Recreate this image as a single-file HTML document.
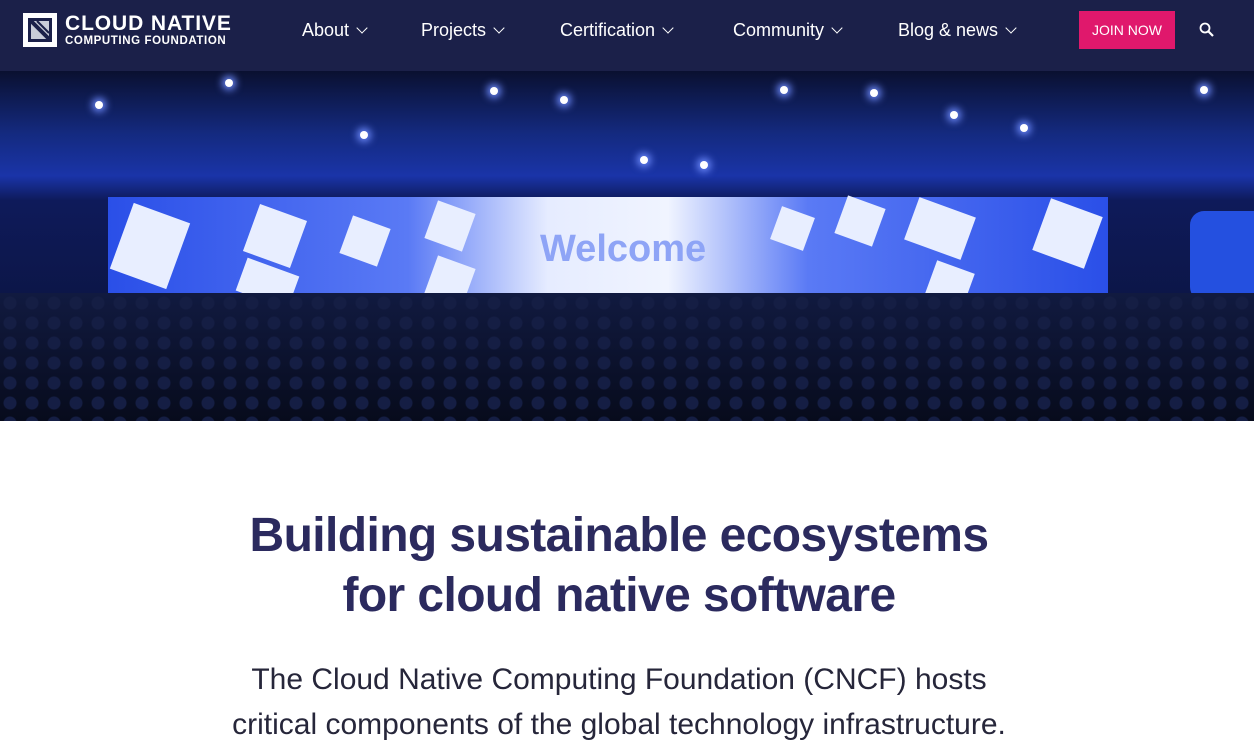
<!DOCTYPE html>
<html><head><meta charset="utf-8"><style>
*{margin:0;padding:0;box-sizing:border-box}
body{width:1254px;height:748px;overflow:hidden;background:#fff;font-family:"Liberation Sans",sans-serif}
nav{position:absolute;top:0;left:0;width:1254px;height:71px;background:#1b2049}
.logo{position:absolute;left:23px;top:13px}
.lt1{position:absolute;left:42px;top:-1px;color:#fff;font-weight:bold;font-size:21px;letter-spacing:0.9px;white-space:nowrap}
.lt2{position:absolute;left:42px;top:22px;color:#fff;font-weight:bold;font-size:11.5px;white-space:nowrap;letter-spacing:0.6px}
.menu{position:absolute;top:20px;color:#fff;font-size:18px;white-space:nowrap}
.menu span{position:absolute;white-space:nowrap}
.chev{display:inline-block;width:8px;height:8px;border-right:1.5px solid #fff;border-bottom:1.5px solid #fff;transform:rotate(45deg);margin-left:9px;position:relative;top:-4px}
.join{position:absolute;left:1079px;top:11px;width:96px;height:38px;background:#e0186c;color:#fff;font-size:14px;text-align:center;line-height:38px}
.hero{position:absolute;top:71px;left:0;width:1254px;height:350px;overflow:hidden;
background:linear-gradient(180deg,#0a1030 0%,#142a80 18%,#1a34a8 30%,#0e1a5a 37%,#0a1130 100%)}
.screen{position:absolute;left:108px;top:126px;width:1000px;height:104px;background:linear-gradient(90deg,#2a4fe8,#5a7af5 30%,#e6ecff 44%,#f0f4ff 56%,#5a7af5 70%,#2a4fe8)}
.sq{position:absolute;background:#e8eeff;transform:rotate(20deg)}
.dot{position:absolute;width:8px;height:8px;border-radius:50%;background:#fff;box-shadow:0 0 8px 3px #6f8cff}
.crowd{position:absolute;left:0;top:222px;width:1254px;height:128px;background:
radial-gradient(circle at 10px 10px,#151e44 6px,transparent 7px) 0 0/22px 20px,
linear-gradient(180deg,#111a40,#070b1c)}
h1{position:absolute;top:506px;width:1238px;text-align:center;color:#2b2a5e;font-size:48px;line-height:60px;font-weight:bold;letter-spacing:-0.6px}
p{position:absolute;top:657px;width:1238px;text-align:center;color:#26263a;font-size:30px;line-height:45px}
</style></head><body>
<nav>
<div class="logo">
<svg width="34" height="34" viewBox="0 0 34 34"><rect width="34" height="34" fill="#fff"/><rect x="5" y="5" width="24" height="24" fill="#1b2049"/><rect x="8" y="8" width="18" height="18" fill="#c9ccd8"/><path d="M8 8 L26 26" stroke="#1b2049" stroke-width="4"/><path d="M14 8 L26 20" stroke="#1b2049" stroke-width="2"/></svg>
<div class="lt1">CLOUD NATIVE</div>
<div class="lt2">COMPUTING FOUNDATION</div>
</div>
<div class="menu">
<span style="left:302px">About<i class="chev"></i></span>
<span style="left:421px">Projects<i class="chev"></i></span>
<span style="left:560px">Certification<i class="chev"></i></span>
<span style="left:733px">Community<i class="chev"></i></span>
<span style="left:898px">Blog &amp; news<i class="chev"></i></span>
</div>
<div class="join">JOIN NOW</div>
<svg style="position:absolute;left:1199px;top:22px" width="16" height="16" viewBox="0 0 16 16"><circle cx="6" cy="6" r="4.5" stroke="#fff" stroke-width="1.8" fill="none"/><path d="M9.5 9.5 L14 14" stroke="#fff" stroke-width="2.2"/></svg>
</nav>
<div class="hero">
<div class="dot" style="left:225px;top:8px"></div><div class="dot" style="left:490px;top:16px"></div>
<div class="dot" style="left:560px;top:25px"></div><div class="dot" style="left:780px;top:15px"></div>
<div class="dot" style="left:870px;top:18px"></div><div class="dot" style="left:1020px;top:53px"></div>
<div class="dot" style="left:1200px;top:15px"></div><div class="dot" style="left:95px;top:30px"></div>
<div class="dot" style="left:640px;top:85px"></div><div class="dot" style="left:700px;top:90px"></div>
<div class="dot" style="left:360px;top:60px"></div><div class="dot" style="left:950px;top:40px"></div>
<div class="screen"></div>
<div class="sq" style="left:120px;top:140px;width:60px;height:70px"></div>
<div class="sq" style="left:250px;top:140px;width:50px;height:50px"></div>
<div class="sq" style="left:240px;top:195px;width:55px;height:35px"></div>
<div class="sq" style="left:345px;top:150px;width:40px;height:40px"></div>
<div class="sq" style="left:430px;top:135px;width:40px;height:40px"></div>
<div class="sq" style="left:430px;top:190px;width:40px;height:40px"></div>
<div class="sq" style="left:775px;top:140px;width:35px;height:35px"></div>
<div class="sq" style="left:840px;top:130px;width:40px;height:40px"></div>
<div class="sq" style="left:910px;top:135px;width:60px;height:45px"></div>
<div class="sq" style="left:1040px;top:135px;width:55px;height:55px"></div>
<div class="sq" style="left:930px;top:195px;width:40px;height:35px"></div>
<div style="position:absolute;left:1190px;top:140px;width:64px;height:90px;background:#2450e0;border-radius:14px 0 0 14px"></div>
<div style="position:absolute;left:540px;top:157px;color:#8ea4f6;font-weight:bold;font-size:38px">Welcome</div>
<div class="crowd"></div>
</div>
<h1>Building sustainable ecosystems<br>for cloud native software</h1>
<p>The Cloud Native Computing Foundation (CNCF) hosts<br>critical components of the global technology infrastructure.</p>
</body></html>
